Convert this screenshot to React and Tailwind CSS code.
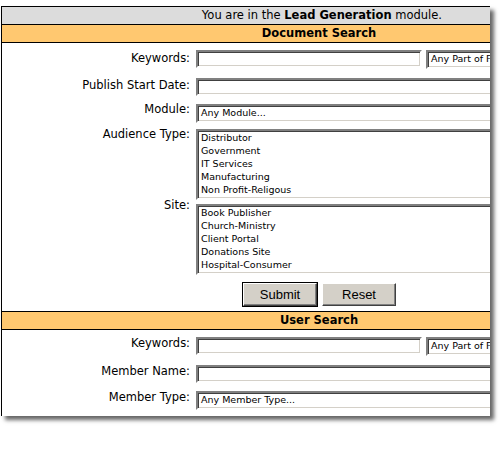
import React from 'react';

const labelFont = "font-['DejaVu_Sans',Verdana,sans-serif]";
const fieldFont = "font-['DejaVu_Sans',Tahoma,sans-serif] text-[9.5px]";

// classic windows sunken field
const sunken =
  'border-2 border-t-[#808080] border-l-[#808080] border-b-white border-r-white shadow-[inset_1px_1px_0_#404040,inset_-1px_-1px_0_#d4d0c8] bg-white';

const TextBox = ({ w = 'w-[226px]' }) => <div className={`${sunken} ${w} h-[18px] shrink-0`} />;

const SelectBox = ({ w = 'w-[420px]', text }) => (
  <div className={`${sunken} ${w} h-[19px] shrink-0 flex items-center pl-[3px] ${fieldFont} text-black`}>
    {text}
  </div>
);

const ListBox = ({ items }) => (
  <div className={`${sunken} w-[420px] h-[71px] shrink-0 pl-[3px] ${fieldFont} leading-[13px] text-black`}>
    {items.map((item) => (
      <div key={item}>{item}</div>
    ))}
  </div>
);

// labelPos nudges the label against its field, the source page is not consistent
const Row = ({ label, className = '', labelPos = 'pt-[2px]', children }) => (
  <div className={`flex ${className}`}>
    <div className={`w-[188px] shrink-0 text-right ${labelPos} text-[11.5px] leading-[14px] ${labelFont} text-black`}>
      {label}
    </div>
    <div className="ml-[6px] flex gap-[4px]">{children}</div>
  </div>
);

const SectionHeader = ({ title, top }) => (
  <div
    className={`${top ? 'h-[19px] border-y' : 'h-[18px] border-b'} border-black bg-[#ffc870] flex items-center justify-center text-[11.5px] font-bold ${labelFont} text-black`}
  >
    {title}
  </div>
);

const Button = ({ children, primary }) => (
  <div className={primary ? 'border border-black' : ''}>
    <div className="w-[74px] h-[23px] bg-[#d4d0c8] border border-t-white border-l-white border-b-[#404040] border-r-[#404040] shadow-[inset_-1px_-1px_0_#808080] flex items-center justify-center text-[13px] font-['Liberation_Sans',Arial,sans-serif] text-black">
      {children}
    </div>
  </div>
);

export default function App() {
  return (
    <div className="w-[500px] h-[450px] bg-white pt-[6px] pl-[1px]">
      <div className="w-[489px] h-[410px] border-l border-t border-black overflow-hidden bg-white shadow-[4px_4px_4px_rgba(0,0,0,0.6)]">
        <div
          className={`h-[18px] bg-[#dcdcdc] border-b border-black flex items-center justify-end pr-[48px] text-[11.5px] ${labelFont} text-black`}
        >
          <span>
            You are in the <b>Lead Generation</b> module.
          </span>
        </div>
        <div className="w-[634px]">
          <SectionHeader title="Document Search" />
          <div className="pt-[7px] pb-[4px]">
            <Row label="Keywords:" labelPos="pt-[0.5px]">
              <TextBox />
              <SelectBox w="w-[130px]" text="Any Part of Field" />
            </Row>
            <Row label="Publish Start Date:" className="mt-[9px]" labelPos="pt-0">
              <TextBox w="w-[420px]" />
            </Row>
            <Row label="Module:" className="mt-[8px]" labelPos="-mt-[2px]">
              <SelectBox text="Any Module..." />
            </Row>
            <Row label="Audience Type:" className="mt-[6px]" labelPos="-mt-[2px]">
              <ListBox items={['Distributor', 'Government', 'IT Services', 'Manufacturing', 'Non Profit-Religous']} />
            </Row>
            <Row label="Site:" className="mt-[4px]" labelPos="-mt-[6px]">
              <ListBox items={['Book Publisher', 'Church-Ministry', 'Client Portal', 'Donations Site', 'Hospital-Consumer']} />
            </Row>
            <div className="mt-[7px] flex justify-center items-center gap-[4px]">
              <Button primary>Submit</Button>
              <Button>Reset</Button>
            </div>
          </div>
          <SectionHeader title="User Search" top />
          <div className="pt-[7px]">
            <Row label="Keywords:" labelPos="-mt-[1px]">
              <TextBox />
              <SelectBox w="w-[130px]" text="Any Part of Field" />
            </Row>
            <Row label="Member Name:" className="mt-[9px]" labelPos="-mt-[1px]">
              <TextBox w="w-[420px]" />
            </Row>
            <Row label="Member Type:" className="mt-[8px]" labelPos="-mt-[1px]">
              <SelectBox text="Any Member Type..." />
            </Row>
            <Row label="" className="mt-[6px]">
              <SelectBox text="" />
            </Row>
          </div>
        </div>
      </div>
    </div>
  );
}
